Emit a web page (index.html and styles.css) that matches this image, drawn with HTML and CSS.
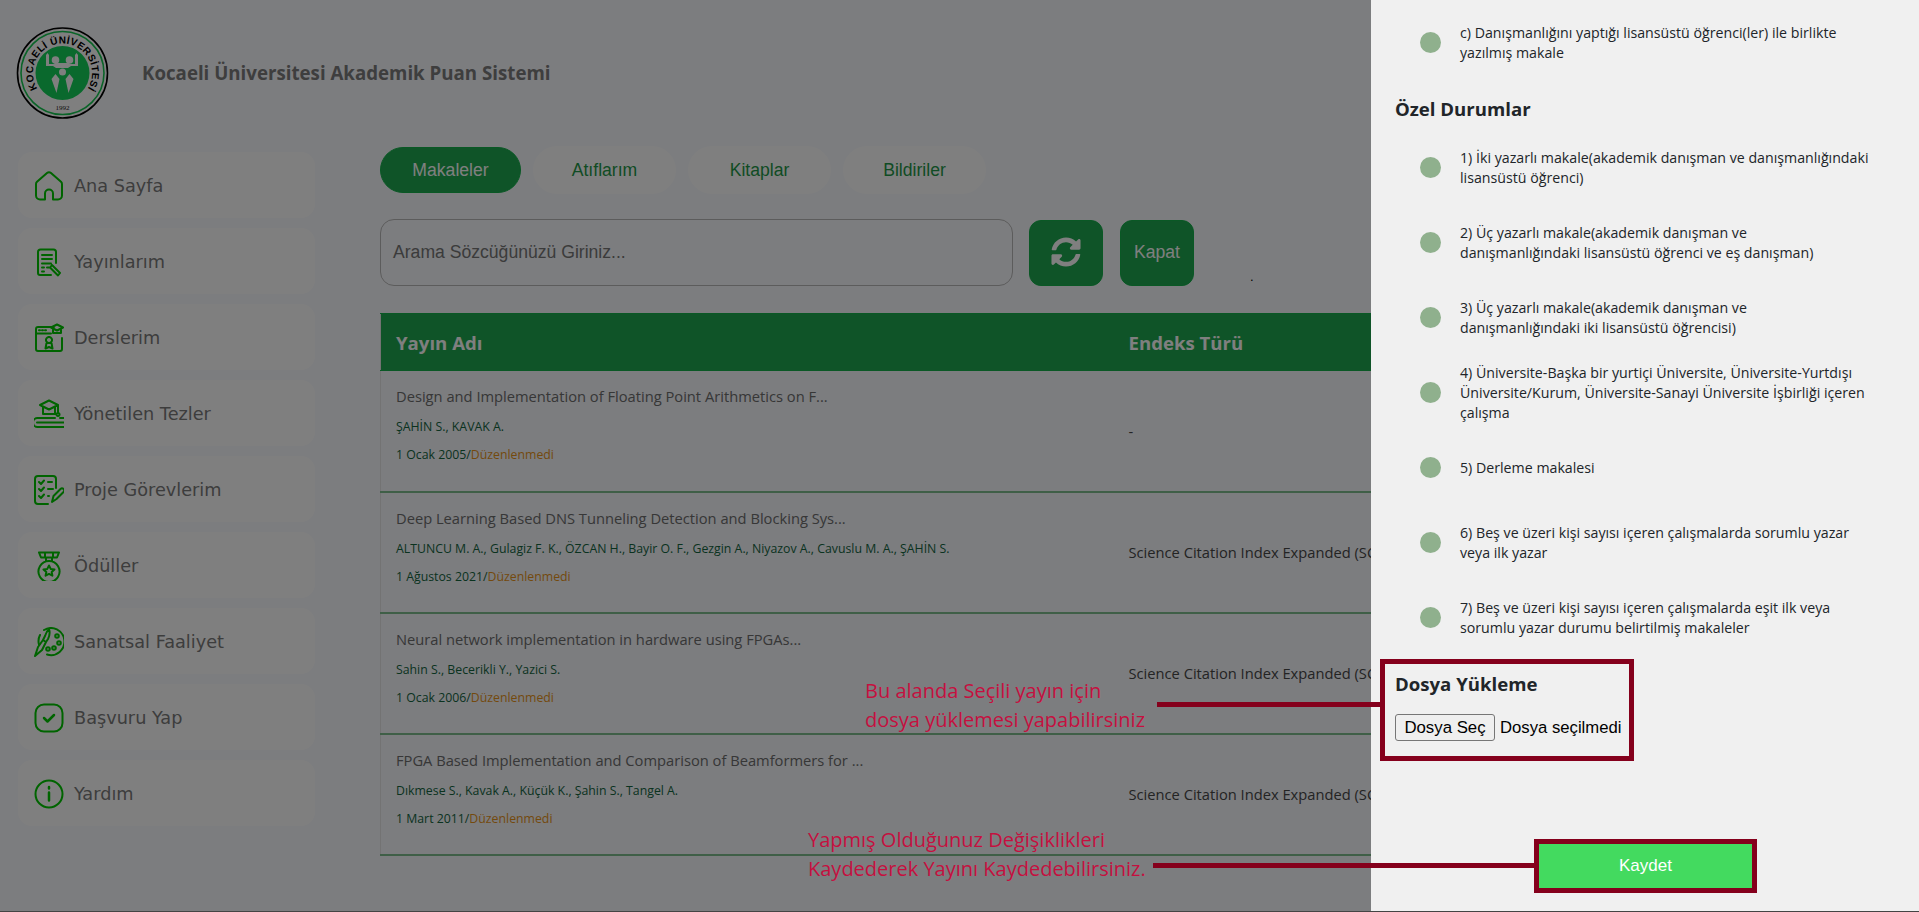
FILE: index.html
```html
<!DOCTYPE html>
<html lang="tr">

<head>
    <meta charset="UTF-8">
    <meta name="viewport" content="width=device-width, initial-scale=1.0">
    <title>Kocaeli Üniversitesi Akademik Puan Sistemi</title>
    <link rel="stylesheet" href="styles.css">
</head>

<body>
    <div id="app">
        <header id="topbar">
            <svg class="logo" viewBox="0 0 93 92" width="93" height="92">
                <circle cx="46.5" cy="46" r="45" fill="#fff" stroke="#000" stroke-width="1.6"/>
                <circle cx="46.5" cy="46" r="41.5" fill="none" stroke="#14c850" stroke-width="1.6"/>
                <circle cx="46.5" cy="46" r="27" fill="#14d25a"/>
                <g fill="#fff">
                    <circle cx="39.500" cy="33" r="3.800"/>
                    <circle cx="53.500" cy="33" r="3.800"/>
                    <circle cx="46.500" cy="45" r="3.500"/>
                    <path d="M30 28l1.500-2 1.500 2v9h5l1-1h14l1 1h5v-9l1.500-2 1.500 2v11h-7l-3 2H40l-3-2h-7z"/>
                    <path d="M39.500 47l-4 5 5 14 3-14zM53.500 47l4 5-5 14-3-14z"/>
                </g>
                <path id="logo-arc" d="M21.500 61.600A29.500 29.500 0 1 1 71.500 61.600" fill="none"/>
                <text class="logo-name"><textPath href="#logo-arc" textLength="125" lengthAdjust="spacing">KOCAELİ ÜNİVERSİTESİ</textPath></text>
                <text class="logo-year" x="46.5" y="83" text-anchor="middle">1992</text>
            </svg>
            <h1>Kocaeli Üniversitesi Akademik Puan Sistemi</h1>
        </header>

        <div id="layout">
            <nav id="sidebar">
                <a class="nav-item">
                    <svg class="nav-icon" viewBox="0 0 30 30"><path d="M11 28.500H6a4 4 0 0 1-4-4V13a3 3 0 0 1 1-2.200L13 2.100a3 3 0 0 1 4 0l10 8.700a3 3 0 0 1 1 2.200v11.500a4 4 0 0 1-4 4h-5v-6a4 4 0 0 0-8 0z"/></svg>
                    Ana Sayfa
                </a>
                <a class="nav-item">
                    <svg class="nav-icon" viewBox="0 0 30 30"><path d="M22 16V5a2.500 2.500 0 0 0-2.500-2.500h-13A2.500 2.500 0 0 0 4 5v21a2 2 0 0 0 2 2h11M8 8h10M8 12h10M8 16.500h9M8 20.500h2M13 20.500h2M8 24.500h2M18 18l8 8-2 2.500-8-8z"/></svg>
                    Yayınlarım
                </a>
                <a class="nav-item">
                    <svg class="nav-icon" viewBox="0 0 30 30"><path d="M20 4H4a2 2 0 0 0-2 2v20a2 2 0 0 0 2 2h22a2 2 0 0 0 2-2V15M2 10.500h15M5 7.300h1M8 7.300h1M11 7.300h1M23 1.500l6 3-6 3-6-3zM19 6.500v3.500h8V6.500M15 14a3 3 0 1 0 .01 0M12.500 20l-1 5.500 3.500-1.500 3.500 1.500-1-5.500"/></svg>
                    Derslerim
                </a>
                <a class="nav-item">
                    <svg class="nav-icon" viewBox="0 0 30 30"><path d="M15 1.500l9 4.500-9 4.500-9-4.500zM9 8v7h12V8M24 6v8M24 14a1.500 1.500 0 1 0 .01 0M5 19H3.500a2.500 2.500 0 0 0 0 9H30M5 19h16M26 19h4M3 23.500h27"/></svg>
                    Yönetilen Tezler
                </a>
                <a class="nav-item">
                    <svg class="nav-icon" viewBox="0 0 30 30"><path d="M22 13V4a3 3 0 0 0-3-3H4a3 3 0 0 0-3 3v22a3 3 0 0 0 3 3h10M5 7l2 2 3-3.500M14 7h4M5 14l2 2 3-3.500M14 14h5M5 21l2 2 3-3.500M14 21h1M18 27l1.500-6 7-7a2 2 0 0 1 3 3l-7 7z"/></svg>
                    Proje Görevlerim
                </a>
                <a class="nav-item">
                    <svg class="nav-icon" viewBox="0 0 30 30"><path d="M5 1.500h20l-2 5H7zM11 2v4M19 2v4M12 6.500v3.500M18 6.500v3.500M15 10a10.500 10.500 0 1 0 .01 0M15 14.500l1.700 3.400 3.800.5-2.800 2.600.7 3.700-3.400-1.800-3.400 1.800.7-3.700-2.800-2.600 3.800-.5z"/></svg>
                    Ödüller
                </a>
                <a class="nav-item">
                    <svg class="nav-icon" viewBox="0 0 30 30"><path d="M10 3A13.500 13.500 0 1 1 13 27.500M5 17.500A13 13 0 0 1 6 8"/><path d="M15 2c1 3 1 6-1 10l-2 3-3-2 2-4c1-3 2-5 4-7zM9 13l3 2-4 8-7 6 3-9z"/><circle cx="23" cy="9" r="1.800"/><circle cx="25" cy="16" r="1.800"/><circle cx="20" cy="21" r="1.800"/><circle cx="14" cy="22" r="1.800"/></svg>
                    Sanatsal Faaliyet
                </a>
                <a class="nav-item">
                    <svg class="nav-icon" viewBox="0 0 30 30"><path d="M10 1.500h10a8.500 8.500 0 0 1 8.500 8.500v10a8.500 8.500 0 0 1-8.500 8.500H10A8.500 8.500 0 0 1 1.500 20V10A8.500 8.500 0 0 1 10 1.500z"/><path class="thick" d="M10 15l3.500 3.500 6.500-6.500"/></svg>
                    Başvuru Yap
                </a>
                <a class="nav-item">
                    <svg class="nav-icon" viewBox="0 0 30 30"><circle cx="15" cy="15" r="13.500"/><path class="thick" d="M15 13.500v8M15 8v1.500"/></svg>
                    Yardım
                </a>
            </nav>

            <main id="content">
                <div class="tabs">
                    <button class="tab tab-active">Makaleler</button>
                    <button class="tab">Atıflarım</button>
                    <button class="tab">Kitaplar</button>
                    <button class="tab">Bildiriler</button>
                </div>

                <div class="search-row">
                    <div class="search-box">Arama Sözcüğünüzü Giriniz...</div>
                    <button class="square-btn square-refresh">
                        <svg viewBox="0 0 512 512" width="30" height="30"><path d="M370.720 133.280C339.458 104.008 298.888 87.962 255.848 88c-77.458.068-144.328 53.178-162.791 126.850-1.344 5.363-6.122 9.150-11.651 9.150H24.103c-7.498 0-13.194-6.807-11.807-14.176C33.933 94.924 134.813 8 256 8c66.448 0 126.791 26.136 171.315 68.685L463.030 40.970C478.149 25.851 504 36.559 504 57.941V192c0 13.255-10.745 24-24 24H345.941c-21.382 0-32.090-25.851-16.971-40.971l41.750-41.749zM32 296h134.059c21.382 0 32.090 25.851 16.971 40.971l-41.750 41.750c31.262 29.273 71.835 45.319 114.876 45.280 77.418-.07 144.315-53.144 162.787-126.849 1.344-5.363 6.122-9.150 11.651-9.150h57.304c7.498 0 13.194 6.807 11.807 14.176C478.067 417.076 377.187 504 256 504c-66.448 0-126.791-26.136-171.315-68.685L48.970 471.030C33.851 486.149 8 475.441 8 454.059V320c0-13.255 10.745-24 24-24z" fill="#fff"/></svg>
                    </button>
                    <button class="square-btn">Kapat</button>
                    <span class="stray-dot">.</span>
                </div>

                <table id="publications">
                    <thead>
                        <tr>
                            <th class="col-title">Yayın Adı</th>
                            <th>Endeks Türü</th>
                        </tr>
                    </thead>
                    <tbody>
                        <tr>
                            <td class="col-title">
                                <p class="pub-title">Design and Implementation of Floating Point Arithmetics on F...</p>
                                <p class="pub-authors">ŞAHİN S., KAVAK A.</p>
                                <p class="pub-date">1 Ocak 2005/<span class="pub-status">Düzenlenmedi</span></p>
                            </td>
                            <td class="pub-index">-</td>
                        </tr>
                        <tr>
                            <td class="col-title">
                                <p class="pub-title">Deep Learning Based DNS Tunneling Detection and Blocking Sys...</p>
                                <p class="pub-authors">ALTUNCU M. A., Gulagiz F. K., ÖZCAN H., Bayir O. F., Gezgin A., Niyazov A., Cavuslu M. A., ŞAHİN S.</p>
                                <p class="pub-date">1 Ağustos 2021/<span class="pub-status">Düzenlenmedi</span></p>
                            </td>
                            <td class="pub-index">Science Citation Index Expanded (SC</td>
                        </tr>
                        <tr>
                            <td class="col-title">
                                <p class="pub-title">Neural network implementation in hardware using FPGAs...</p>
                                <p class="pub-authors">Sahin S., Becerikli Y., Yazici S.</p>
                                <p class="pub-date">1 Ocak 2006/<span class="pub-status">Düzenlenmedi</span></p>
                            </td>
                            <td class="pub-index">Science Citation Index Expanded (SC</td>
                        </tr>
                        <tr>
                            <td class="col-title">
                                <p class="pub-title">FPGA Based Implementation and Comparison of Beamformers for ...</p>
                                <p class="pub-authors">Dıkmese S., Kavak A., Küçük K., Şahin S., Tangel A.</p>
                                <p class="pub-date">1 Mart 2011/<span class="pub-status">Düzenlenmedi</span></p>
                            </td>
                            <td class="pub-index">Science Citation Index Expanded (SC</td>
                        </tr>
                    </tbody>
                </table>
            </main>
        </div>

        <div id="overlay"></div>

        <aside id="drawer">
            <div class="option"><span class="radio"></span><span>c) Danışmanlığını yaptığı lisansüstü öğrenci(ler) ile birlikte<br>yazılmış makale</span></div>

            <h3 class="drawer-heading">Özel Durumlar</h3>

            <div class="option"><span class="radio"></span><span>1) İki yazarlı makale(akademik danışman ve danışmanlığındaki<br>lisansüstü öğrenci)</span></div>
            <div class="option"><span class="radio"></span><span>2) Üç yazarlı makale(akademik danışman ve<br>danışmanlığındaki lisansüstü öğrenci ve eş danışman)</span></div>
            <div class="option"><span class="radio"></span><span>3) Üç yazarlı makale(akademik danışman ve<br>danışmanlığındaki iki lisansüstü öğrencisi)</span></div>
            <div class="option"><span class="radio"></span><span>4) Üniversite-Başka bir yurtiçi Üniversite, Üniversite-Yurtdışı<br>Üniversite/Kurum, Üniversite-Sanayi Üniversite İşbirliği içeren<br>çalışma</span></div>
            <div class="option"><span class="radio"></span><span>5) Derleme makalesi</span></div>
            <div class="option"><span class="radio"></span><span>6) Beş ve üzeri kişi sayısı içeren çalışmalarda sorumlu yazar<br>veya ilk yazar</span></div>
            <div class="option"><span class="radio"></span><span>7) Beş ve üzeri kişi sayısı içeren çalışmalarda eşit ilk veya<br>sorumlu yazar durumu belirtilmiş makaleler</span></div>

            <section class="upload marked">
                <h3>Dosya Yükleme</h3>
                <div class="file-row">
                    <button class="file-btn">Dosya Seç</button>
                    <span class="file-name">Dosya seçilmedi</span>
                </div>
            </section>

            <button class="save-btn marked">Kaydet</button>
        </aside>

        <!-- tutorial annotations drawn over the page -->
        <p class="note note-upload">Bu alanda Seçili yayın için<br>dosya yüklemesi yapabilirsiniz</p>
        <div class="note-line line-upload"></div>
        <p class="note note-save">Yapmış Olduğunuz Değişiklikleri<br>Kaydederek Yayını Kaydedebilirsiniz.</p>
        <div class="note-line line-save"></div>
    </div>
</body>

</html>
```
FILE: styles.css
```css
* {
    margin: 0;
    padding: 0;
    box-sizing: border-box;
}

body {
    font-family: "Liberation Sans", Arial, sans-serif;
    background-color: #f8fafe;
    overflow: hidden;
}

#app {
    position: relative;
    height: 912px;
    overflow: hidden;
    border-bottom: 1px solid #444;
}

/* Header */
#topbar {
    display: flex;
    align-items: center;
    height: 146px;
    padding-left: 16px;
}

#topbar h1 {
    margin-left: 33px;
    margin-bottom: 2px;
    font-family: "Open Sans", sans-serif;
    font-size: 18.700px;
    font-weight: 700;
    color: #7c7c7c;
}

.logo-name {
    font-family: "Liberation Sans", sans-serif;
    font-size: 10px;
    font-weight: 700;
    fill: #000;
}

.logo-year {
    font-family: "Liberation Serif", serif;
    font-size: 7px;
    fill: #222;
}

#layout {
    display: flex;
    align-items: flex-start;
}

/* Sidebar */
#sidebar {
    flex: none;
    display: flex;
    flex-direction: column;
    gap: 10px;
    width: 297px;
    margin: 6px 0 0 18px;
}

.nav-item {
    display: flex;
    align-items: center;
    gap: 10px;
    height: 66px;
    padding: 1px 0 0 16px;
    border-radius: 14px;
    background-color: #ffffff;
    font-family: "DejaVu Sans", Verdana, sans-serif;
    font-size: 17.700px;
    color: #7a7a7a;
}

.nav-icon {
    flex: none;
    width: 30px;
    height: 30px;
    fill: none;
    stroke: #00c800;
    stroke-width: 2;
    stroke-linecap: round;
    stroke-linejoin: round;
}

.nav-icon .thick {
    stroke-width: 2.500;
}

/* Main column */
#content {
    flex: none;
    width: 1400px;
    margin-left: 65px;
}

.tabs {
    display: flex;
    align-items: center;
    gap: 12px;
    height: 48px;
}

.tab {
    width: 143px;
    height: 48px;
    border: none;
    border-radius: 24px;
    background-color: #ffffff;
    font-family: inherit;
    font-size: 17.600px;
    color: #1f9848;
}

.tab-active {
    width: 141px;
    height: 46px;
    border: 1px solid #14b04a;
    background-color: #1ea850;
    color: #fff;
}

.search-row {
    display: flex;
    height: 67px;
    margin-top: 25px;
}

.search-box {
    display: flex;
    align-items: center;
    width: 633px;
    padding-left: 12px;
    border: 1px solid #b8b8b8;
    border-radius: 14px;
    font-size: 17.600px;
    color: #777;
}

.square-btn {
    display: flex;
    align-items: center;
    justify-content: center;
    width: 74px;
    height: 66px;
    margin: 1px 0 0 17px;
    padding-bottom: 2px;
    border: 1px solid #14b04a;
    border-radius: 12px;
    background-color: #1ea850;
    font-family: inherit;
    font-size: 17.600px;
    color: #fff;
}

.square-refresh {
    margin-left: 16px;
}

.stray-dot {
    align-self: flex-end;
    margin: 0 0 0 56px;
    font-size: 13px;
    line-height: 18px;
    color: #000;
}

/* Table */
#publications {
    width: 991px;
    margin-top: 27px;
    border-collapse: collapse;
    table-layout: fixed;
    border-left: 1px solid #e6e6e6;
}

#publications th {
    height: 57px;
    padding-left: 0;
    border: 1px solid #14b04a;
    border-width: 1px 0;
    background-color: #1ea850;
    font-family: "Open Sans", sans-serif;
    font-size: 18.600px;
    font-weight: 700;
    text-align: left;
    color: #fff;
}

#publications td {
    height: 121px;
    border-bottom: 2px solid #7ebe8e;
}

#publications .col-title {
    width: 748px;
    padding-left: 15px;
}

#publications td.col-title {
    padding-top: 15px;
    vertical-align: top;
}

.pub-title {
    font-family: "Open Sans", sans-serif;
    font-size: 14.700px;
    line-height: 20px;
    color: #6e6e6e;
}

.pub-authors,
.pub-date {
    font-family: "Open Sans", sans-serif;
    font-size: 12.300px;
    line-height: 18px;
    color: #14663e;
}

.pub-authors {
    margin-top: 12px;
}

.pub-date {
    margin-top: 10px;
}

.pub-status {
    color: #e8941a;
}

.pub-index {
    font-family: "Open Sans", sans-serif;
    font-size: 14.700px;
    white-space: nowrap;
    color: #484848;
}

#overlay {
    position: absolute;
    inset: 0;
    background-color: rgba(0, 0, 0, 0.5);
}

/* Drawer */
#drawer {
    position: absolute;
    top: 0;
    right: 0;
    bottom: 0;
    display: flex;
    flex-direction: column;
    width: 548px;
    padding-top: 5px;
    background-color: #f0f0f0;
    font-family: "Open Sans", sans-serif;
    color: #212529;
}

.option {
    flex: none;
    display: flex;
    align-items: center;
    gap: 19px;
    height: 75px;
    padding-left: 49px;
    font-size: 14.200px;
    line-height: 20px;
}

.radio {
    flex: none;
    width: 21px;
    height: 21px;
    border-radius: 50%;
    background-color: #8fb08d;
}

.drawer-heading {
    flex: none;
    display: flex;
    align-items: center;
    height: 50px;
    padding: 6px 0 0 24px;
    font-size: 18.600px;
    font-weight: 700;
}

.marked {
    outline: 5px solid #85001c;
}

.upload {
    flex: none;
    width: 244px;
    height: 92px;
    margin: 9px 0 0 14px;
    padding: 8px 0 0 10px;
}

.upload h3 {
    font-size: 18.600px;
    line-height: 24px;
    font-weight: 700;
}

.file-row {
    display: flex;
    align-items: center;
    gap: 5px;
    margin-top: 18px;
    font-family: "Liberation Sans", Arial, sans-serif;
}

.file-btn {
    width: 100px;
    height: 27px;
    border: 1px solid #767676;
    border-radius: 3px;
    background-color: #efefef;
    font-family: inherit;
    font-size: 16.800px;
    color: #000;
}

.file-name {
    font-size: 16.700px;
    color: #000;
}

.save-btn {
    flex: none;
    width: 213px;
    height: 44px;
    margin: auto 0 23px 168px;
    border: none;
    background-color: #43da5f;
    font-family: "Liberation Sans", Arial, sans-serif;
    font-size: 17px;
    color: #fff;
}

/* Annotations */
.note {
    position: absolute;
    font-family: "Open Sans", sans-serif;
    font-size: 20px;
    line-height: 29px;
    color: #c5103f;
}

.note-upload {
    left: 865px;
    top: 676px;
}

.note-save {
    left: 808px;
    top: 825px;
}

.note-line {
    position: absolute;
    height: 5px;
    background-color: #85001c;
}

.line-upload {
    left: 1157px;
    top: 702px;
    width: 223px;
}

.line-save {
    left: 1153px;
    top: 863px;
    width: 381px;
}
```
